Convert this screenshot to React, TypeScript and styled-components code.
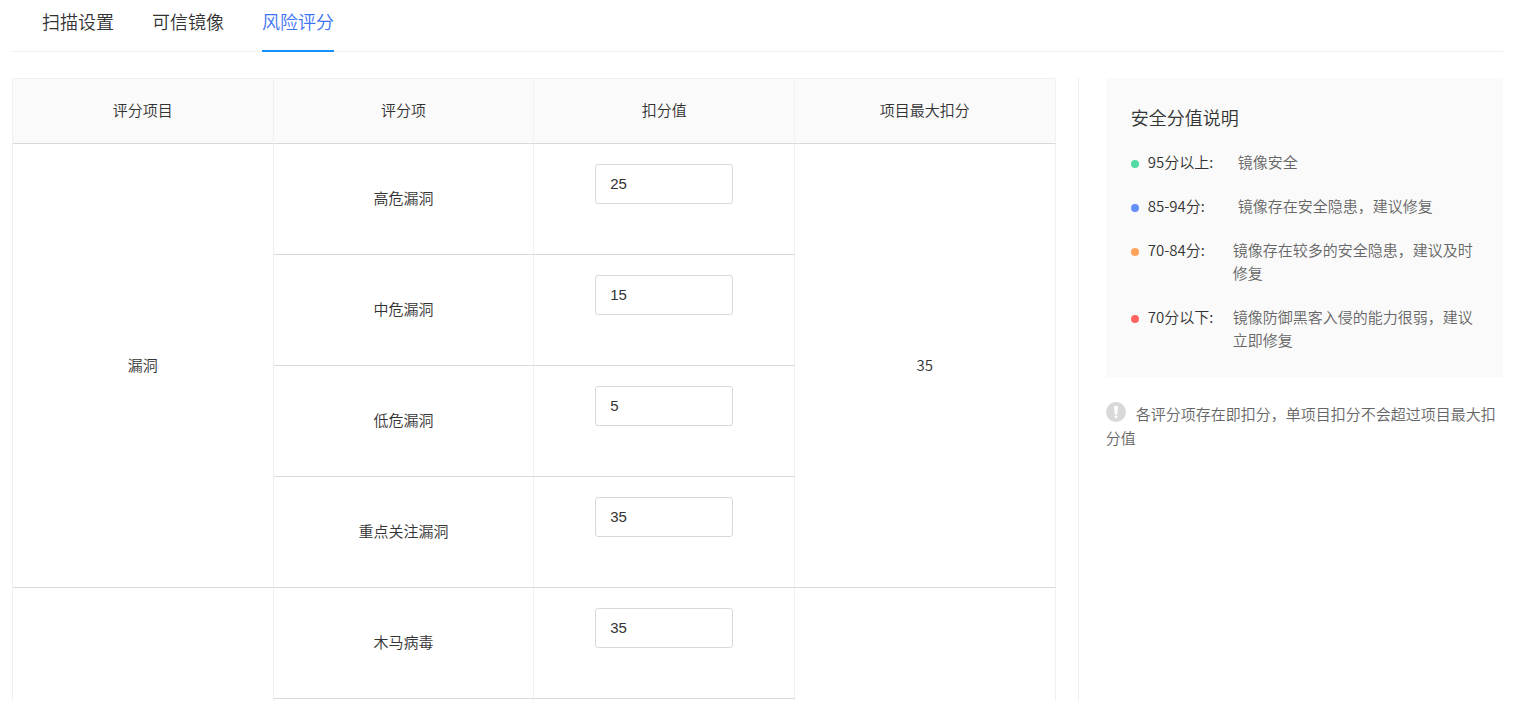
import React, { useState } from "react";
import styled, { createGlobalStyle } from "styled-components";

const GlobalStyle = createGlobalStyle`
  *, *::before, *::after { box-sizing: border-box; }
  body {
    margin: 0;
    background: #fff;
    color: #333;
    font-family: "Noto Sans CJK SC", "Liberation Sans", sans-serif;
    font-size: 15px;
    font-weight: 350;
    line-height: 24px;
  }
`;

const Page = styled.div`
  display: flex;
  flex-direction: column;
  height: 100vh;
  padding: 0 10px 0 12px;
  overflow-y: auto;
  scrollbar-width: none;
`;

const TabBar = styled.nav`
  display: flex;
  flex: none;
  gap: 38px;
  padding-left: 30px;
  box-shadow: inset 0 -1px #f0f0f0;
`;

const Tab = styled.button<{ $active: boolean }>`
  height: 52px;
  padding: 0 0 8px;
  border: 0;
  border-bottom: 2px solid ${(p) => (p.$active ? "#1890ff" : "transparent")};
  background: none;
  color: ${(p) => (p.$active ? "#3d73f5" : "#333")};
  font: inherit;
  font-size: 18px;
  cursor: pointer;
`;

const Content = styled.main`
  display: flex;
  flex: 1 0 auto;
  gap: 22px;
  padding-top: 26px;
`;

const TablePane = styled.section`
  flex: 0 0 70%;
`;

const ScoreTable = styled.table`
  width: 100%;
  table-layout: fixed;
  border-collapse: separate;
  border-spacing: 0;
  border: solid #f0f0f0;
  border-width: 1px 0 0 1px;
  border-radius: 2px 2px 0 0;
  text-align: center;
`;

const HeadCell = styled.th`
  height: 65px;
  padding: 0 16px 2px;
  border-right: 1px solid #f0f0f0;
  border-bottom: 1px solid #d9d9d9;
  background: #fafafa;
  font-weight: inherit;
`;

const Cell = styled.td`
  height: 111px;
  padding: 0 16px 2px;
  border-right: 1px solid #f0f0f0;
  border-bottom: 1px solid #d9d9d9;
`;

const InputCell = styled(Cell)`
  padding-top: 20px;
  vertical-align: top;
`;

const ScoreInput = styled.input`
  display: block;
  width: 138px;
  height: 40px;
  margin: 0 auto;
  padding: 0 14px 2px;
  border: 1px solid #d9d9d9;
  border-radius: 3px;
  background: #fff;
  color: #333;
  font: 15px "Liberation Sans", Arial, sans-serif;
`;

const Aside = styled.aside`
  flex: 1;
  min-width: 0;
  padding-left: 27px;
  border-left: 1px solid #f0f0f0;
`;

const Legend = styled.div`
  padding: 25px 25px 26px;
  background: #fafafa;
`;

const LegendTitle = styled.h2`
  margin: 0 0 19px;
  font-size: 18px;
  font-weight: inherit;
  line-height: 28px;
`;

const LegendList = styled.ul`
  display: flex;
  flex-direction: column;
  gap: 21px;
  margin: 0;
  padding: 0;
  list-style: none;
`;

const LegendItem = styled.li`
  display: flex;
  line-height: 23px;
`;

const Dot = styled.span<{ $color: string }>`
  flex: none;
  width: 8px;
  height: 8px;
  margin: 10px 9px 0 0;
  border-radius: 50%;
  background: ${(p) => p.$color};
`;

const Range = styled.span`
  flex: 0 0 85px;
`;

const Meaning = styled.span<{ $indent: boolean }>`
  padding-left: ${(p) => (p.$indent ? 5 : 0)}px;
  color: #666;
`;

const Note = styled.p`
  margin: 25px 0 0;
  color: #666;
`;

const NoteIcon = styled.svg`
  width: 20px;
  height: 20px;
  margin-right: 10px;
  vertical-align: -2px;
`;

const tabs = ["扫描设置", "可信镜像", "风险评分"];
const columns = ["评分项目", "评分项", "扣分值", "项目最大扣分"];

type Item = { name: string; value?: string };
type Group = { name: string; max: string; items: Item[] };

const groups: Group[] = [
  {
    name: "漏洞",
    max: "35",
    items: [
      { name: "高危漏洞", value: "25" },
      { name: "中危漏洞", value: "15" },
      { name: "低危漏洞", value: "5" },
      { name: "重点关注漏洞", value: "35" },
    ],
  },
  { name: "", max: "", items: [{ name: "木马病毒", value: "35" }, { name: "" }] },
];

const levels = [
  { color: "#50dba2", range: "95分以上:", text: "镜像安全", indent: true },
  { color: "#6490fa", range: "85-94分:", text: "镜像存在安全隐患，建议修复", indent: true },
  { color: "#ffa25a", range: "70-84分:", text: "镜像存在较多的安全隐患，建议及时修复", indent: false },
  { color: "#ff6363", range: "70分以下:", text: "镜像防御黑客入侵的能力很弱，建议立即修复", indent: false },
];

export default function App() {
  const [active, setActive] = useState("风险评分");

  return (
    <>
      <GlobalStyle />
      <Page>
        <TabBar>
          {tabs.map((tab) => (
            <Tab key={tab} type="button" $active={tab === active} onClick={() => setActive(tab)}>
              {tab}
            </Tab>
          ))}
        </TabBar>
        <Content>
          <TablePane>
            <ScoreTable>
              <thead>
                <tr>
                  {columns.map((column) => (
                    <HeadCell key={column} scope="col">{column}</HeadCell>
                  ))}
                </tr>
              </thead>
              <tbody>
                {groups.map((group, g) =>
                  group.items.map((item, i) => (
                    <tr key={`${g}-${i}`}>
                      {i === 0 && <Cell rowSpan={group.items.length}>{group.name}</Cell>}
                      <Cell id={`item-${g}-${i}`}>{item.name}</Cell>
                      <InputCell>
                        {item.value && (
                          <ScoreInput
                            type="text"
                            inputMode="numeric"
                            defaultValue={item.value}
                            aria-labelledby={`item-${g}-${i}`}
                          />
                        )}
                      </InputCell>
                      {i === 0 && <Cell rowSpan={group.items.length}>{group.max}</Cell>}
                    </tr>
                  ))
                )}
              </tbody>
            </ScoreTable>
          </TablePane>
          <Aside>
            <Legend>
              <LegendTitle>安全分值说明</LegendTitle>
              <LegendList>
                {levels.map((level) => (
                  <LegendItem key={level.range}>
                    <Dot $color={level.color} />
                    <Range>{level.range}</Range>
                    <Meaning $indent={level.indent}>{level.text}</Meaning>
                  </LegendItem>
                ))}
              </LegendList>
            </Legend>
            <Note>
              <NoteIcon viewBox="0 0 20 20" aria-hidden="true">
                <circle cx="10" cy="10" r="10" fill="#d9d9d9" />
                <path d="M8 4.6Q8 4 8.6 4h2.8q.6 0 .6.6l-.7 7.4q-.1.6-.7.6H9.4q-.6 0-.7-.6Z" fill="#fff" />
                <circle cx="10" cy="14.8" r="1.4" fill="#fff" />
              </NoteIcon>
              各评分项存在即扣分，单项目扣分不会超过项目最大扣分值
            </Note>
          </Aside>
        </Content>
      </Page>
    </>
  );
}
